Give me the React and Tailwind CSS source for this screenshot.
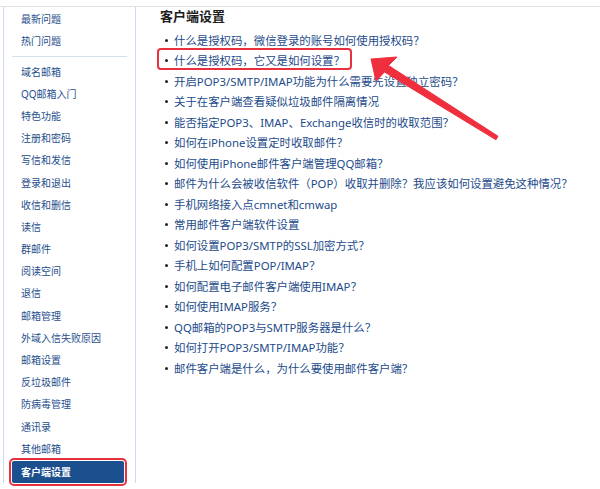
import React from "react";

const sideTop = ["最新问题", "热门问题"];
const sideItems = [
  "域名邮箱",
  "QQ邮箱入门",
  "特色功能",
  "注册和密码",
  "写信和发信",
  "登录和退出",
  "收信和删信",
  "读信",
  "群邮件",
  "阅读空间",
  "退信",
  "邮箱管理",
  "外域入信失败原因",
  "邮箱设置",
  "反垃圾邮件",
  "防病毒管理",
  "通讯录",
  "其他邮箱",
];

const questions = [
  "什么是授权码，微信登录的账号如何使用授权码？",
  "什么是授权码，它又是如何设置？",
  "开启POP3/SMTP/IMAP功能为什么需要先设置独立密码？",
  "关于在客户端查看疑似垃圾邮件隔离情况",
  "能否指定POP3、IMAP、Exchange收信时的收取范围？",
  "如何在iPhone设置定时收取邮件？",
  "如何使用iPhone邮件客户端管理QQ邮箱？",
  "邮件为什么会被收信软件（POP）收取并删除？我应该如何设置避免这种情况？",
  "手机网络接入点cmnet和cmwap",
  "常用邮件客户端软件设置",
  "如何设置POP3/SMTP的SSL加密方式？",
  "手机上如何配置POP/IMAP？",
  "如何配置电子邮件客户端使用IMAP？",
  "如何使用IMAP服务？",
  "QQ邮箱的POP3与SMTP服务器是什么？",
  "如何打开POP3/SMTP/IMAP功能？",
  "邮件客户端是什么，为什么要使用邮件客户端？",
];

function Sidebar() {
  return (
    <div className="ml-[3px] w-[133px] shrink-0 border-x border-[#cddcec] text-[10px] text-[#1e4e8c]">
      <div className="pt-[1px]">
        {sideTop.map((t) => (
          <div key={t} className="h-[22.5px] flex items-center pl-[17px]">{t}</div>
        ))}
      </div>
      <div className="ml-[8px] mt-[3px] w-[115px] h-px bg-[#d4e1ef]" />
      <div className="mt-[4px]">
        {sideItems.map((t) => (
          <div key={t} className="h-[22.2px] flex items-center pl-[17px]">{t}</div>
        ))}
        <div className="mt-[1px] ml-[8px] w-[112px] h-[22px] flex items-center pl-[9px] bg-[#1b4f8e] text-white font-bold rounded-[2px] outline-2 outline-offset-1 outline-[#e8303e]">
          客户端设置
        </div>
      </div>
    </div>
  );
}

export default function App() {
  return (
    <div className="relative w-[600px] h-[489px] overflow-hidden bg-white font-['Noto_Sans','Noto_Sans_CJK_SC',sans-serif]">
      <div className="h-[7px] border-b border-[#e2e2e2]" />
      <div className="flex">
        <Sidebar />
        <div className="pl-[24px]">
          <h2 className="text-[13px] leading-[18px] font-bold text-[#1d1d1d]">客户端设置</h2>
          <ul className="mt-[5px] text-[11.4px] text-[#1d4b8a]">
            {questions.map((q) => (
              <li key={q} className="h-[20.5px] flex items-center whitespace-nowrap">
                <span className="ml-[5px] mr-[6px] w-[3px] h-[3px] rounded-full bg-[#222]" />
                {q}
              </li>
            ))}
          </ul>
        </div>
      </div>

      {/* annotation box */}
      <div className="absolute left-[157px] top-[48px] w-[195px] h-[22px] border-2 border-[#e8303e] rounded-[4px]" />

      {/* annotation arrow */}
      <svg className="absolute inset-0 pointer-events-none" width="600" height="489" viewBox="0 0 600 489">
        <polygon
          points="371,59 397,57 388.5,65.5 498,136.2 496,139.8 384.5,72 376,81"
          fill="#ef2f3d"
          strokeLinejoin="round"
          stroke="#ef2f3d"
          strokeWidth="1"
        />
      </svg>
    </div>
  );
}
